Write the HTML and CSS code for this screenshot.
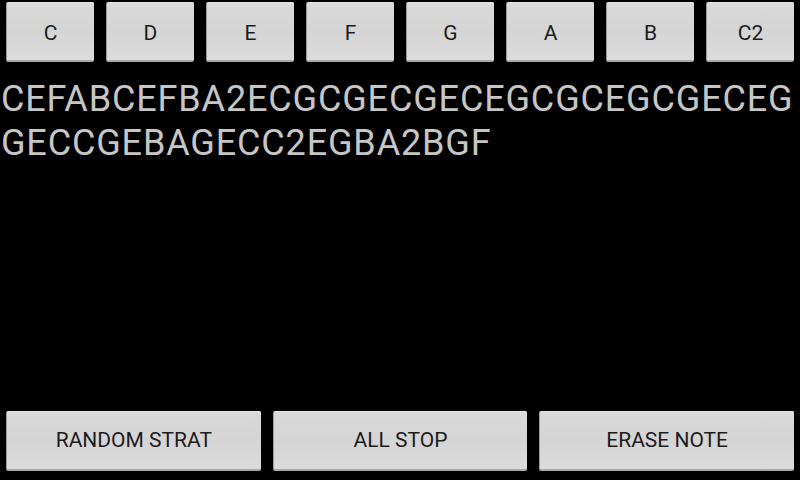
FILE: index.html
```html
<!DOCTYPE html>
<html lang="en">
<head>
  <meta charset="UTF-8" />
  <title>Note Player</title>
  <link rel="stylesheet" href="styles.css">
</head>
<body>

<div class="app">
  <div class="keys">
    <div class="slot"><button class="btn key">C</button></div>
    <div class="slot"><button class="btn key">D</button></div>
    <div class="slot"><button class="btn key">E</button></div>
    <div class="slot"><button class="btn key">F</button></div>
    <div class="slot"><button class="btn key">G</button></div>
    <div class="slot"><button class="btn key">A</button></div>
    <div class="slot"><button class="btn key">B</button></div>
    <div class="slot"><button class="btn key">C2</button></div>
  </div>

  <div class="notes">CEFABCEFBA2ECGCGECGECEGCGCEGCGECEGGECCGEBAGECC2EGBA2BGF</div>

  <div class="controls">
    <div class="slot"><button class="btn">RANDOM STRAT</button></div>
    <div class="slot"><button class="btn">ALL STOP</button></div>
    <div class="slot"><button class="btn">ERASE NOTE</button></div>
  </div>
</div>

</body>
</html>
```

FILE: styles.css
```css
* {
  box-sizing: border-box;
  margin: 0;
  padding: 0;
}

body {
  background: #000;
  font-family: Roboto, "Noto Sans", sans-serif;
  width: 800px;
  height: 480px;
  overflow: hidden;
}

.app {
  display: flex;
  flex-direction: column;
  height: 480px;
}

/* Note keys */
.keys {
  display: grid;
  grid-template-columns: repeat(8, 1fr);
  padding-top: 2px;
}

.slot {
  padding: 0 6px;
}

.btn {
  display: block;
  width: 100%;
  height: 60px;
  border: none;
  border-radius: 2px;
  border-left: 1px solid #9a9a9a;
  border-bottom: 2px solid #a8a8a8;
  background: linear-gradient(to bottom, #dadada 0%, #d5d5d5 50%, #dcdcdc 100%);
  box-shadow: inset 0 1px 0 #e4e4e4;
  color: #1c1c1c;
  font-family: Roboto, "Noto Sans", sans-serif;
  font-size: 21px;
  cursor: pointer;
}

.key {
  padding-top: 4px;
}

/* Played notes */
.notes {
  flex-grow: 1;
  margin-top: 15px;
  padding-left: 1px;
  color: #c6c6c6;
  font-size: 36px;
  line-height: 44px;
  letter-spacing: 0.85px;
  word-break: break-all;
}

/* Bottom controls */
.controls {
  display: grid;
  grid-template-columns: repeat(3, 1fr);
  padding-bottom: 9px;
}
```
